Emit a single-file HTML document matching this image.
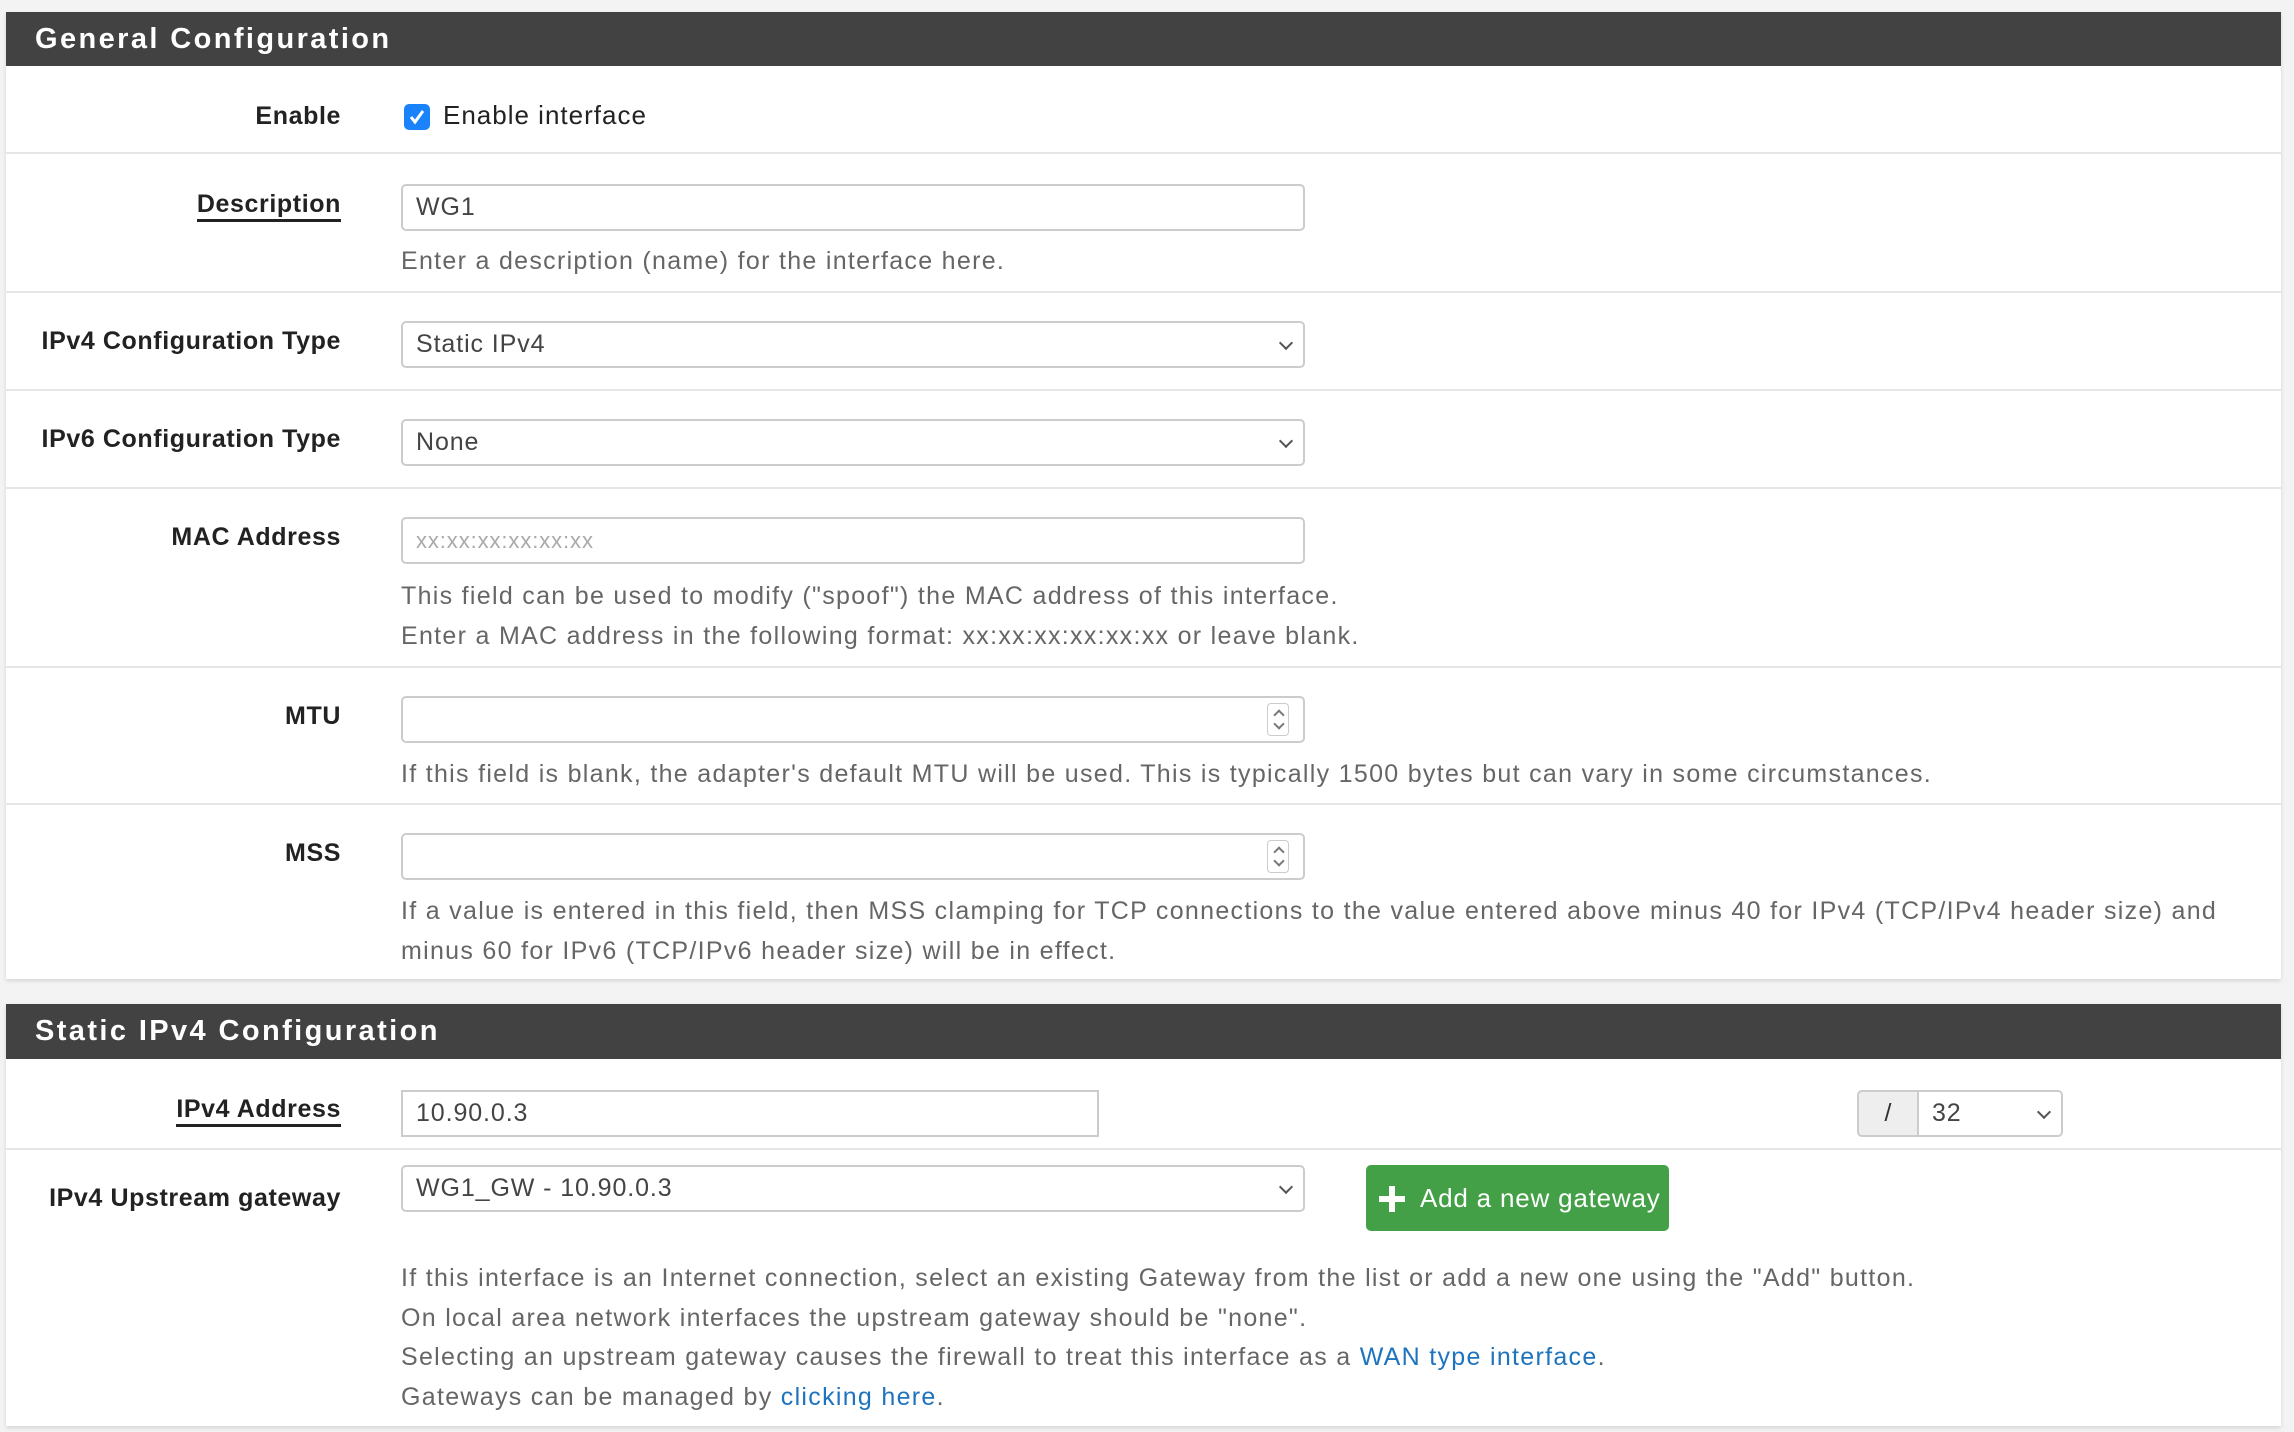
<!DOCTYPE html>
<html><head><meta charset="utf-8"><style>
*{box-sizing:border-box;margin:0;padding:0}
body{width:2294px;height:1432px;background:#f3f3f3;font-family:"Liberation Sans",Arial,sans-serif;position:relative;overflow:hidden;color:#333}
.panel{position:absolute;left:6px;width:2275px;background:#fff;box-shadow:0 2px 4px rgba(0,0,0,.12)}
.hd{background:#424242;color:#fff;font-weight:bold;font-size:29px;letter-spacing:2.4px;padding-left:29px;display:flex;align-items:center}
.row{position:absolute;left:0;right:0;border-top:2px solid #e6e6e6}
.lbl{position:absolute;right:1940px;font-weight:bold;font-size:25px;letter-spacing:0.6px;color:#222;white-space:nowrap;text-align:right}
.u{border-bottom:3px solid #222;padding-bottom:1px}
.in{position:absolute;left:395px;width:904px;height:47px;border:2px solid #ccc;border-radius:5px;font-size:25px;letter-spacing:0.9px;padding-left:13px;line-height:43px;color:#444;background:#fff}
.sel::after{content:"";position:absolute;right:12px;top:15px;width:8px;height:8px;border-right:2px solid #555;border-bottom:2px solid #555;transform:rotate(45deg)}
.help{position:absolute;left:395px;font-size:25px;letter-spacing:1.3px;color:#666;line-height:39.5px;white-space:nowrap}
.spin{position:absolute;right:14px;top:5px;width:22px;height:33px;border:1px solid #ccc;border-radius:4px}
.spin::before,.spin::after{content:"";position:absolute;left:7px;width:6px;height:6px;border-left:2px solid #777;border-top:2px solid #777}
.spin::before{top:7px;transform:rotate(45deg)}
.spin::after{top:16px;transform:rotate(225deg)}
a{color:#1e73be;text-decoration:none}
</style></head><body>
<div class="panel" style="top:12px;height:967px">
 <div class="hd" style="height:54px">General Configuration</div>
 <div class="row" style="top:54px;height:86px;border-top:none">
  <div class="lbl" style="top:36px">Enable</div>
  <div style="position:absolute;left:398px;top:38px;width:26px;height:26px;background:#1a82fb;border-radius:5px"><svg width="26" height="26"><path d="M7 13 L11 18 L19 7" stroke="#fff" stroke-width="3" fill="none"/></svg></div>
  <div style="position:absolute;left:437px;top:34px;font-size:26px;letter-spacing:1px;color:#222">Enable interface</div>
 </div>
 <div class="row" style="top:140px;height:139px">
  <div class="lbl" style="top:36px"><span class="u">Description</span></div>
  <div class="in" style="top:30px">WG1</div>
  <div class="help" style="top:88px">Enter a description (name) for the interface here.</div>
 </div>
 <div class="row" style="top:279px;height:98px">
  <div class="lbl" style="top:34px">IPv4 Configuration Type</div>
  <div class="in sel" style="top:28px">Static IPv4</div>
 </div>
 <div class="row" style="top:377px;height:98px">
  <div class="lbl" style="top:34px">IPv6 Configuration Type</div>
  <div class="in sel" style="top:28px">None</div>
 </div>
 <div class="row" style="top:475px;height:179px">
  <div class="lbl" style="top:34px">MAC Address</div>
  <div class="in" style="top:28px;color:#aaa;font-size:22px">xx:xx:xx:xx:xx:xx</div>
  <div class="help" style="top:88px">This field can be used to modify ("spoof") the MAC address of this interface.<br>Enter a MAC address in the following format: xx:xx:xx:xx:xx:xx or leave blank.</div>
 </div>
 <div class="row" style="top:654px;height:137px">
  <div class="lbl" style="top:34px">MTU</div>
  <div class="in" style="top:28px"><div class="spin"></div></div>
  <div class="help" style="top:87px">If this field is blank, the adapter's default MTU will be used. This is typically 1500 bytes but can vary in some circumstances.</div>
 </div>
 <div class="row" style="top:791px;height:176px">
  <div class="lbl" style="top:34px">MSS</div>
  <div class="in" style="top:28px"><div class="spin"></div></div>
  <div class="help" style="top:87px">If a value is entered in this field, then MSS clamping for TCP connections to the value entered above minus 40 for IPv4 (TCP/IPv4 header size) and<br>minus 60 for IPv6 (TCP/IPv6 header size) will be in effect.</div>
 </div>
</div>
<div class="panel" style="top:1004px;height:422px">
 <div class="hd" style="height:55px">Static IPv4 Configuration</div>
 <div class="row" style="top:55px;height:89px;border-top:none">
  <div class="lbl" style="top:36px"><span class="u">IPv4 Address</span></div>
  <div class="in" style="top:31px;width:698px;border-radius:0">10.90.0.3</div>
  <div style="position:absolute;left:1851px;top:31px;width:62px;height:47px;background:#eee;border:2px solid #ccc;border-radius:5px 0 0 5px;font-size:25px;text-align:center;line-height:43px">/</div>
  <div class="in sel" style="left:1911px;top:31px;width:146px;border-radius:0 5px 5px 0">32</div>
 </div>
 <div class="row" style="top:144px;height:278px">
  <div class="lbl" style="top:34px">IPv4 Upstream gateway</div>
  <div class="in sel" style="top:15px">WG1_GW - 10.90.0.3</div>
  <div style="position:absolute;left:1360px;top:15px;width:303px;height:66px;background:#43a047;border-radius:5px;color:#fff;font-size:26px;letter-spacing:0.8px;line-height:66px;padding-left:54px;white-space:nowrap">
   <svg style="position:absolute;left:10px;top:18px" width="32" height="32"><path d="M16 3V29M3 16H29" stroke="#fff" stroke-width="6"/></svg>Add a new gateway</div>
  <div class="help" style="top:109px">If this interface is an Internet connection, select an existing Gateway from the list or add a new one using the "Add" button.<br>On local area network interfaces the upstream gateway should be "none".<br>Selecting an upstream gateway causes the firewall to treat this interface as a <a>WAN type interface</a>.<br>Gateways can be managed by <a>clicking here</a>.</div>
 </div>
</div>
</body></html>
